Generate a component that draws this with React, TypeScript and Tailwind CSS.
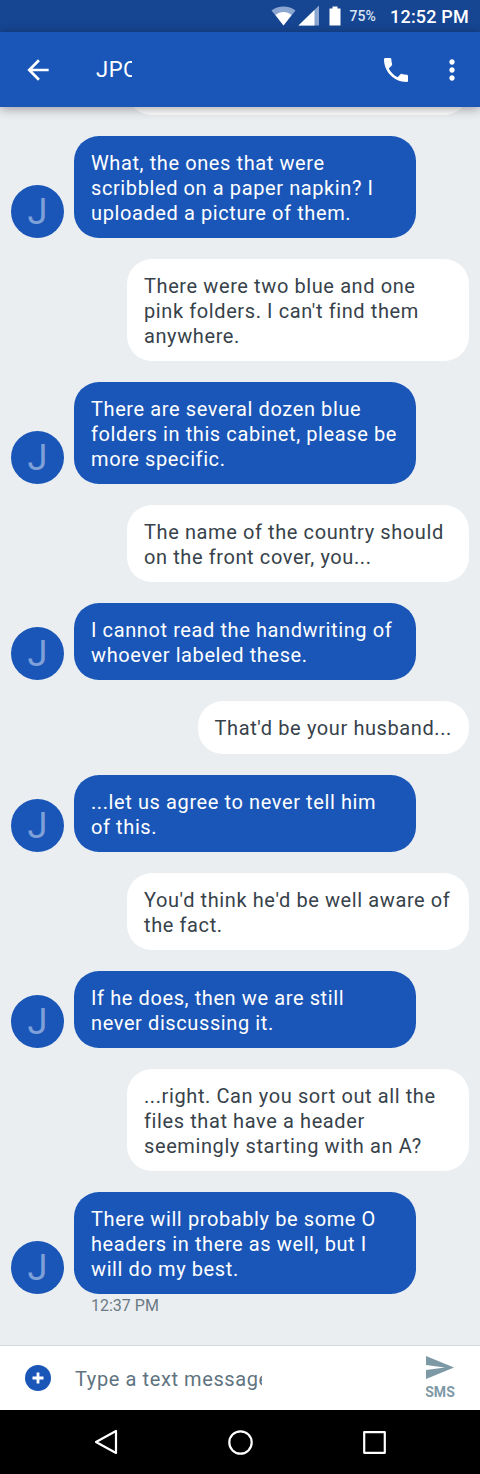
import React from 'react';

const messages: { from: 'them' | 'me'; text: string }[] = [
  { from: 'them', text: 'What, the ones that were scribbled on a paper napkin? I uploaded a picture of them.' },
  { from: 'me', text: "There were two blue and one pink folders. I can't find them anywhere." },
  { from: 'them', text: 'There are several dozen blue folders in this cabinet, please be more specific.' },
  { from: 'me', text: 'The name of the country should on the front cover, you...' },
  { from: 'them', text: 'I cannot read the handwriting of whoever labeled these.' },
  { from: 'me', text: "That'd be your husband..." },
  { from: 'them', text: '...let us agree to never tell him of this.' },
  { from: 'me', text: "You'd think he'd be well aware of the fact." },
  { from: 'them', text: 'If he does, then we are still never discussing it.' },
  { from: 'me', text: '...right. Can you sort out all the files that have a header seemingly starting with an A?' },
  { from: 'them', text: 'There will probably be some O headers in there as well, but I will do my best.' },
];

const StatusBar = () => (
  <div className="h-8 shrink-0 bg-[#164592] flex items-center justify-end pr-[11px] text-white">
    <svg width="25" height="20" viewBox="0 0 25 20" className="mr-[1px]">
      <path d="M0.5 4.5C7 -0.8 18 -0.8 24.5 4.5L12.5 19.5Z" fill="#8ba6d0" />
      <path d="M4.5 9C9 5 16 5 20.5 9L12.5 19.5Z" fill="#fff" />
    </svg>
    <svg width="22" height="22" viewBox="0 0 22 22" className="ml-[1px]">
      <path d="M21 0.5V20.5H0.5Z" fill="#8ba6d0" />
      <path d="M16.5 5V20.5H0.5Z" fill="#fff" />
    </svg>
    <svg width="12" height="20" viewBox="0 0 12 20" className="ml-[9px]">
      <path d="M3.5 0.5H8.5V2.5H11.5V19.5H0.5V2.5H3.5Z" fill="#fff" />
    </svg>
    <span className="ml-[8px] text-[14px] font-medium tracking-[0.1px] text-[#dbe4f2]">75%</span>
    <span className="ml-[14px] text-[18px] font-medium tracking-[0.2px]">12:52 PM</span>
  </div>
);

const Header = () => (
  <div className="relative z-10 h-[75px] shrink-0 bg-[#1a56b8] flex items-center text-white shadow-[0_2px_10px_rgba(0,0,0,0.35)]">
    <svg width="32" height="32" viewBox="0 0 24 24" className="ml-[22px]" fill="#fff">
      <path d="M20 11H7.83l5.59-5.59L12 4l-8 8 8 8 1.41-1.41L7.83 13H20v-2z" />
    </svg>
    <div className="ml-[42px] w-[36px] overflow-hidden whitespace-nowrap text-[22px] tracking-[0.5px]">JPCC</div>
    <svg width="32" height="32" viewBox="0 0 24 24" className="ml-auto" fill="#fff">
      <path d="M6.62 10.79c1.44 2.83 3.76 5.14 6.59 6.59l2.2-2.2c.27-.27.67-.36 1.02-.24 1.12.37 2.33.57 3.57.57.55 0 1 .45 1 1V20c0 .55-.45 1-1 1-9.39 0-17-7.61-17-17 0-.55.45-1 1-1h3.5c.55 0 1 .45 1 1 0 1.25.2 2.45.57 3.57.11.35.03.74-.25 1.02l-2.2 2.2z" />
    </svg>
    <svg width="32" height="32" viewBox="0 0 24 24" className="ml-[24px] mr-[12px]" fill="#fff">
      <path d="M12 8c1.1 0 2-.9 2-2s-.9-2-2-2-2 .9-2 2 .9 2 2 2zm0 2c-1.1 0-2 .9-2 2s.9 2 2 2 2-.9 2-2-.9-2-2-2zm0 6c-1.1 0-2 .9-2 2s.9 2 2 2 2-.9 2-2-.9-2-2-2z" />
    </svg>
  </div>
);

const Avatar = () => (
  <div className="w-[53px] h-[53px] shrink-0 rounded-full bg-[#1a56b8] flex items-center justify-center text-[36px] text-[#7fa1d8]">
    J
  </div>
);

const Composer = () => (
  <div className="h-[65px] shrink-0 bg-white border-t border-[#d5d8db] flex items-center">
    <div className="ml-[25px] w-[26px] h-[26px] rounded-full bg-[#1a56b8] flex items-center justify-center">
      <svg width="14" height="14" viewBox="0 0 14 14" fill="#fff">
        <path d="M5.6 1.5h2.8v4.1h4.1v2.8H8.4v4.1H5.6V8.4H1.5V5.6h4.1z" />
      </svg>
    </div>
    <div className="ml-[24px] w-[187px] pt-[1px] overflow-hidden whitespace-nowrap text-[20px] tracking-[0.6px] text-[#5f7380]">
      Type a text message
    </div>
    <div className="ml-auto mr-[25px] flex flex-col items-center">
      <svg width="30" height="25" viewBox="0 0 30 25" fill="#7e99a6">
        <path d="M1 1L29 12.5L1 24V15L20 12.5L1 10Z" />
      </svg>
      <span className="mt-[3px] text-[14px] leading-[18px] font-bold text-[#7e99a6]">SMS</span>
    </div>
  </div>
);

const NavBar = () => (
  <div className="h-16 shrink-0 bg-black flex items-center justify-center gap-[110px]">
    <svg width="24" height="26" viewBox="0 0 24 26" fill="none" stroke="#fff" strokeWidth="2.2" strokeLinejoin="round">
      <path d="M22 2V24L2 13Z" />
    </svg>
    <svg width="25" height="25" viewBox="0 0 25 25" fill="none" stroke="#fff" strokeWidth="2.2">
      <circle cx="12.5" cy="12.5" r="11.2" />
    </svg>
    <svg width="23" height="23" viewBox="0 0 23 23" fill="none" stroke="#fff" strokeWidth="2.2" strokeLinejoin="round">
      <rect x="1.2" y="1.2" width="20.6" height="20.6" />
    </svg>
  </div>
);

export default function App() {
  return (
    <div className="w-[480px] h-[1474px] flex flex-col overflow-hidden bg-[#ebeef1] font-['Roboto',sans-serif]">
      <StatusBar />
      <Header />
      <div className="flex-1 min-h-0 overflow-hidden flex flex-col justify-end gap-[21px] pb-[51px]">
        <div className="ml-[127px] w-[342px] h-[60px] shrink-0 rounded-[25px] bg-white" />
        {messages.map((m, i) =>
          m.from === 'them' ? (
            <div key={i} className="relative flex items-end pl-[11px] gap-[10px] shrink-0">
              <Avatar />
              <div className="w-[342px] rounded-[25px] bg-[#1a56b8] px-[17px] pt-[14.5px] pb-[12.5px] text-[20px] leading-[25px] tracking-[0.6px] text-white">
                {m.text}
              </div>
              {i === messages.length - 1 && (
                <div className="absolute left-[91px] top-full mt-[2px] text-[16px] leading-[20px] text-[#6a7a85]">12:37 PM</div>
              )}
            </div>
          ) : (
            <div key={i} className="flex justify-end pr-[11px] shrink-0">
              <div className="max-w-[342px] min-h-[53px] rounded-[25px] bg-white px-[17px] pt-[14.5px] pb-[12.5px] text-[20px] leading-[25px] tracking-[0.6px] text-[#37424a]">
                {m.text}
              </div>
            </div>
          ),
        )}
      </div>
      <Composer />
      <NavBar />
    </div>
  );
}
